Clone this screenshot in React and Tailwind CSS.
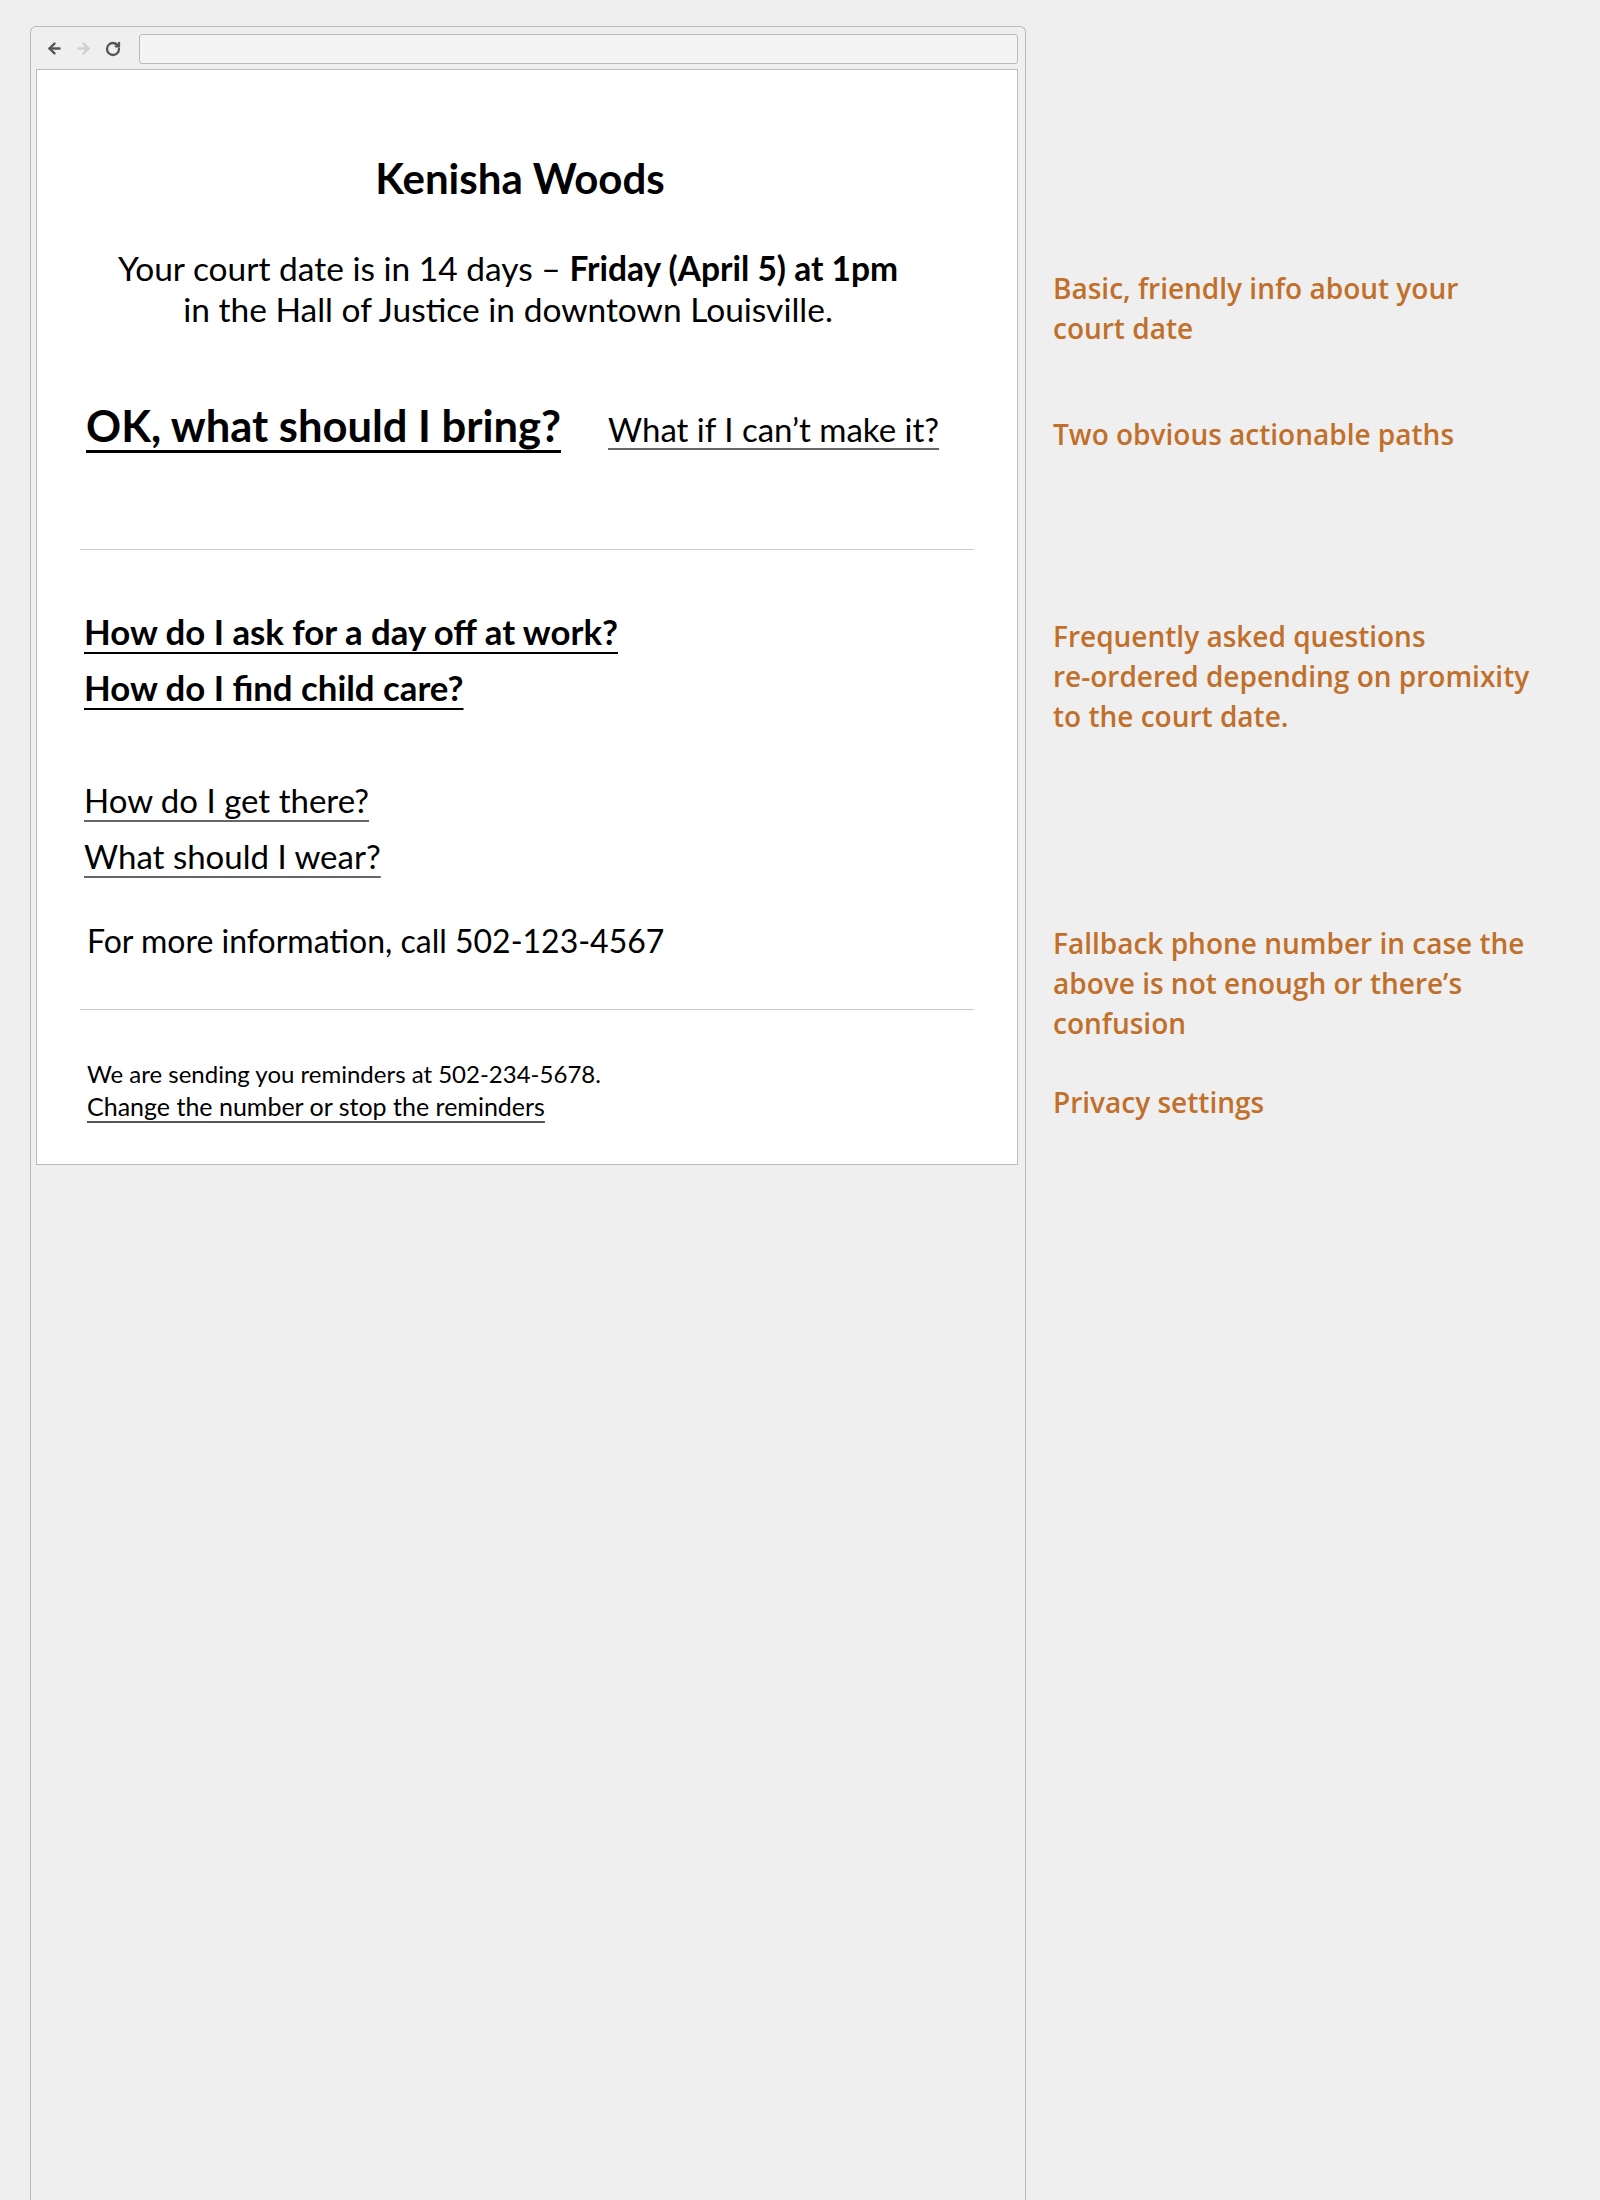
import { ArrowLeft, ArrowRight, RotateCw } from 'lucide-react';

const note = "font-['Open_Sans',sans-serif] font-semibold text-[28px] leading-[40px] text-[#c1702b]";

export default function App() {
  return (
    <div className="h-[2200px] bg-[#efefef] flex overflow-hidden font-['Lato',sans-serif] text-black">
      {/* Browser window */}
      <div className="ml-[30px] mt-[26px] w-[996px] flex-none flex flex-col border border-b-0 border-[#bdbdbd] rounded-t-[6px] pl-[5px] pr-[7px]">
        <div className="h-[42px] flex items-center pt-[1px]">
          <ArrowLeft size={17} strokeWidth={3.4} className="ml-[10px] text-[#555]" />
          <ArrowRight size={17} strokeWidth={3.4} className="ml-[12px] text-[#cfcfcf]" />
          <RotateCw size={16} strokeWidth={3.4} className="ml-[13px] text-[#555]" />
          <div className="ml-[18px] flex-1 h-[30px] bg-[#f4f4f4] border border-[#bbbbbb] rounded-[3px]" />
        </div>

        <div className="bg-white border border-[#bbbbbb] px-[43px] pt-[86px] pb-[41px]">
          <h1 className="text-center font-bold text-[42px] leading-[44px] pr-[14px]">Kenisha Woods</h1>
          <p className="mt-[48px] text-center text-[33.5px] leading-[41px] pr-[38px]">
            Your court date is in 14 days – <b>Friday (April 5) at 1pm</b>
            <br />
            in the Hall of Justice in downtown Louisville.
          </p>

          {/* Actionable paths */}
          <div className="mt-[71px] flex items-baseline pl-[6px] h-[148px]">
            <a className="font-bold text-[43.5px] leading-[48px] underline decoration-[3px] underline-offset-[8px]">OK, what should I bring?</a>
            <a className="ml-[47px] text-[33px] leading-[48px] underline decoration-[2px] decoration-[#666] underline-offset-[6px]">What if I can’t make it?</a>
          </div>
          <hr className="border-[#cccccc]" />

          {/* FAQ */}
          <div className="pt-[54px] pl-[4px] flex flex-col items-start text-[34.75px] leading-[56px]">
            <a className="font-bold underline decoration-[2px] underline-offset-[7px]">How do I ask for a day off at work?</a>
            <a className="font-bold underline decoration-[2px] underline-offset-[7px]">How do I find child care?</a>
            <a className="mt-[56px] text-[33px] underline decoration-[2px] decoration-[#666] underline-offset-[7px]">How do I get there?</a>
            <a className="text-[33px] underline decoration-[2px] decoration-[#666] underline-offset-[7px]">What should I wear?</a>
            <p className="mt-[29px] pl-[3px] text-[32px]">For more information, call 502-123-4567</p>
          </div>
          <hr className="mt-[40px] border-[#cccccc]" />

          {/* Privacy */}
          <div className="pt-[48px] pl-[7px] text-[24px] leading-[32px]">
            <p>We are sending you reminders at 502-234-5678.</p>
            <a className="text-[25px] underline decoration-[1.5px] decoration-[#555] underline-offset-[5px]">Change the number or stop the reminders</a>
          </div>
        </div>
      </div>

      {/* Annotations */}
      <div className="ml-[27px] flex flex-col">
        <p className={`${note} mt-[268px]`}>Basic, friendly info about your<br />court date</p>
        <p className={`${note} mt-[66px]`}>Two obvious actionable paths</p>
        <p className={`${note} mt-[162px]`}>Frequently asked questions<br />re-ordered depending on promixity<br />to the court date.</p>
        <p className={`${note} mt-[187px]`}>Fallback phone number in case the<br />above is not enough or there’s<br />confusion</p>
        <p className={`${note} mt-[39px]`}>Privacy settings</p>
      </div>
    </div>
  );
}
